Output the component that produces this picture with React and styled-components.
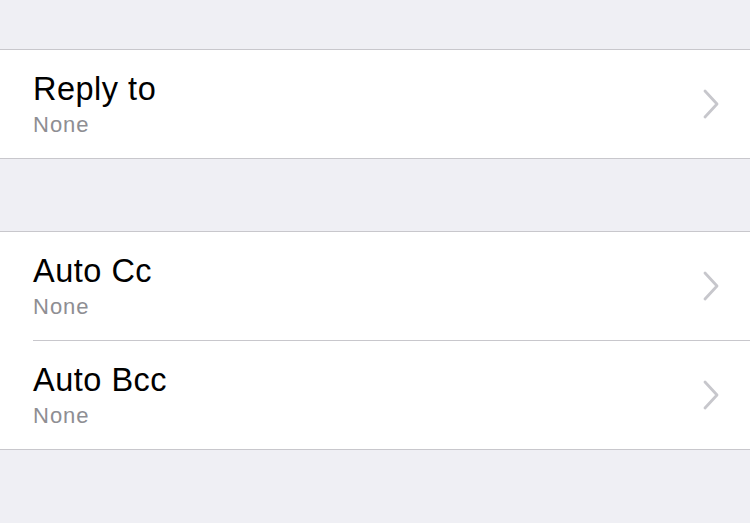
import React from "react";
import styled, { createGlobalStyle } from "styled-components";

const Global = createGlobalStyle`
  html, body { margin: 0; padding: 0; background: #efeff4; }
  body { font-family: "Liberation Sans", Arial, sans-serif; -webkit-font-smoothing: antialiased; }
`;

const Page = styled.div`
  width: 750px;
  height: 523px;
  background: #efeff4;
  padding-top: 49px;
  box-sizing: border-box;
  display: flex;
  flex-direction: column;
`;

const Group = styled.div`
  background: #fff;
  border-top: 1px solid #c8c7cc;
  border-bottom: 1px solid #c8c7cc;
  margin-bottom: ${(p) => p.$gap || 0}px;
`;

const Row = styled.div`
  height: 108px;
  display: flex;
  align-items: center;
  padding-left: 33px;
  padding-right: 30px;
  & + & {
    border-top: 1px solid #c8c7cc;
    margin-left: 33px;
    padding-left: 0;
  }
`;

const Texts = styled.div`
  flex: 1;
  display: flex;
  flex-direction: column;
  padding-top: 1px;
`;

const Title = styled.div`
  font-size: 32.5px;
  line-height: 36px;
  color: #000;
  letter-spacing: 0.5px;
`;

const Sub = styled.div`
  font-size: 22px;
  line-height: 26px;
  color: #8e8e93;
  letter-spacing: 1px;
  margin-top: 5px;
`;

const Chevron = () => (
  <svg width="18" height="30" viewBox="0 0 18 30">
    <path d="M3 2 L15 15 L3 28" fill="none" stroke="#c7c7cc" strokeWidth="2.8" strokeLinecap="round" strokeLinejoin="round" />
  </svg>
);

const Item = ({ title, value }) => (
  <Row>
    <Texts>
      <Title>{title}</Title>
      <Sub>{value}</Sub>
    </Texts>
    <Chevron />
  </Row>
);

export default function App() {
  return (
    <Page>
      <Global />
      <Group $gap={72}>
        <Item title="Reply to" value="None" />
      </Group>
      <Group>
        <Item title="Auto Cc" value="None" />
        <Item title="Auto Bcc" value="None" />
      </Group>
    </Page>
  );
}
